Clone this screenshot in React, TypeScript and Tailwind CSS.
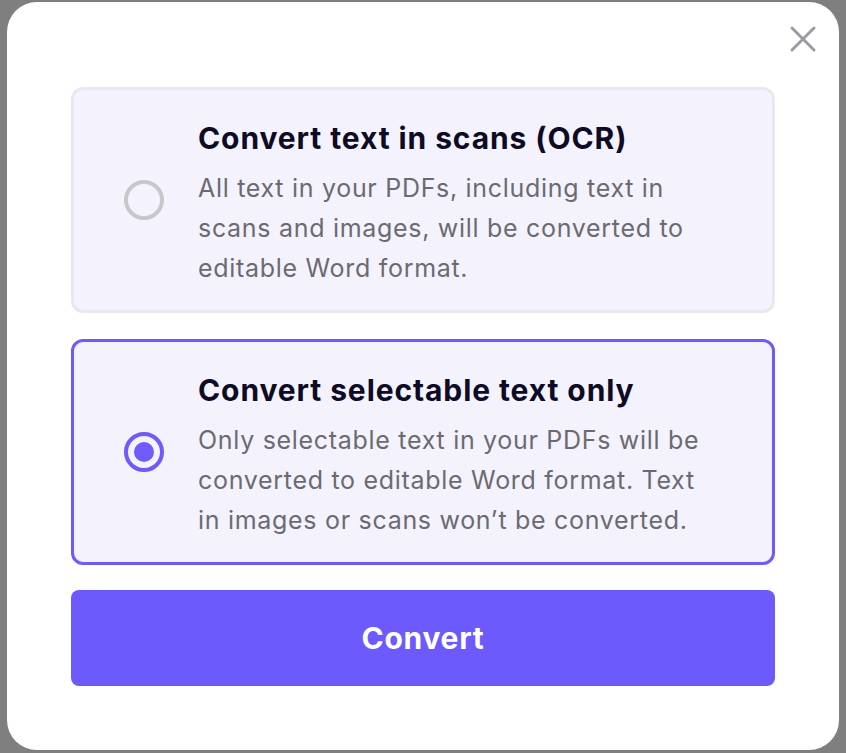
import { useState } from "react";

const options = [
  {
    id: "ocr",
    title: "Convert text in scans (OCR)",
    body: "All text in your PDFs, including text in scans and images, will be converted to editable Word format.",
  },
  {
    id: "text",
    title: "Convert selectable text only",
    body: "Only selectable text in your PDFs will be converted to editable Word format. Text in images or scans won\u2019t be converted.",
  },
];

export default function App(): React.ReactElement {
  const [selected, setSelected] = useState("text");

  return (
    <div className="h-[753px] w-full overflow-hidden bg-[#7f7f7f] pt-[2px] pl-[7px] font-['Inter',sans-serif]">
      <div className="relative h-[748px] w-[832px] rounded-[30px] bg-white px-[64px] pt-[85px]">
        {/* Close */}
        <button
          aria-label="Close"
          className="absolute right-[21px] top-[22px] flex h-[30px] w-[30px] items-center justify-center"
        >
          <svg width="28" height="28" viewBox="0 0 28 28" fill="none">
            <path
              d="M3 3L25 25M25 3L3 25"
              stroke="#9b9ba3"
              strokeWidth="3"
              strokeLinecap="round"
            />
          </svg>
        </button>

        <div className="flex flex-col gap-[26px]">
          {options.map((o) => {
            const active = selected === o.id;
            return (
              <button
                key={o.id}
                onClick={() => setSelected(o.id)}
                className={`flex h-[226px] items-center rounded-[12px] border-[3px] bg-[#f4f3fd] pl-[50px] text-left ${
                  active ? "border-[#6e5bfa]" : "border-[#e9e8ee]"
                }`}
              >
                <span
                  className={`flex h-[40px] w-[40px] shrink-0 items-center justify-center rounded-full border-[4px] ${
                    active ? "border-[#6e5bfa]" : "border-[#c8c8cc]"
                  }`}
                >
                  {active && <span className="h-[20px] w-[20px] rounded-full bg-[#6e5bfa]" />}
                </span>
                <span className="ml-[34px] flex w-[524px] flex-col pt-[5px]">
                  <span className="whitespace-nowrap text-[30px] font-bold leading-[40px] tracking-[0.9px] text-[#0d0b26]">
                    {o.title}
                  </span>
                  <span className="mt-[10px] text-[25px] leading-[40px] tracking-[0.7px] text-[#6b6a72]">
                    {o.body}
                  </span>
                </span>
              </button>
            );
          })}
        </div>

        <button className="mt-[25px] flex h-[96px] w-full items-center justify-center rounded-[8px] bg-[#6d5afc] text-[30px] font-bold tracking-[0.7px] text-white">
          Convert
        </button>
      </div>
    </div>
  );
}
